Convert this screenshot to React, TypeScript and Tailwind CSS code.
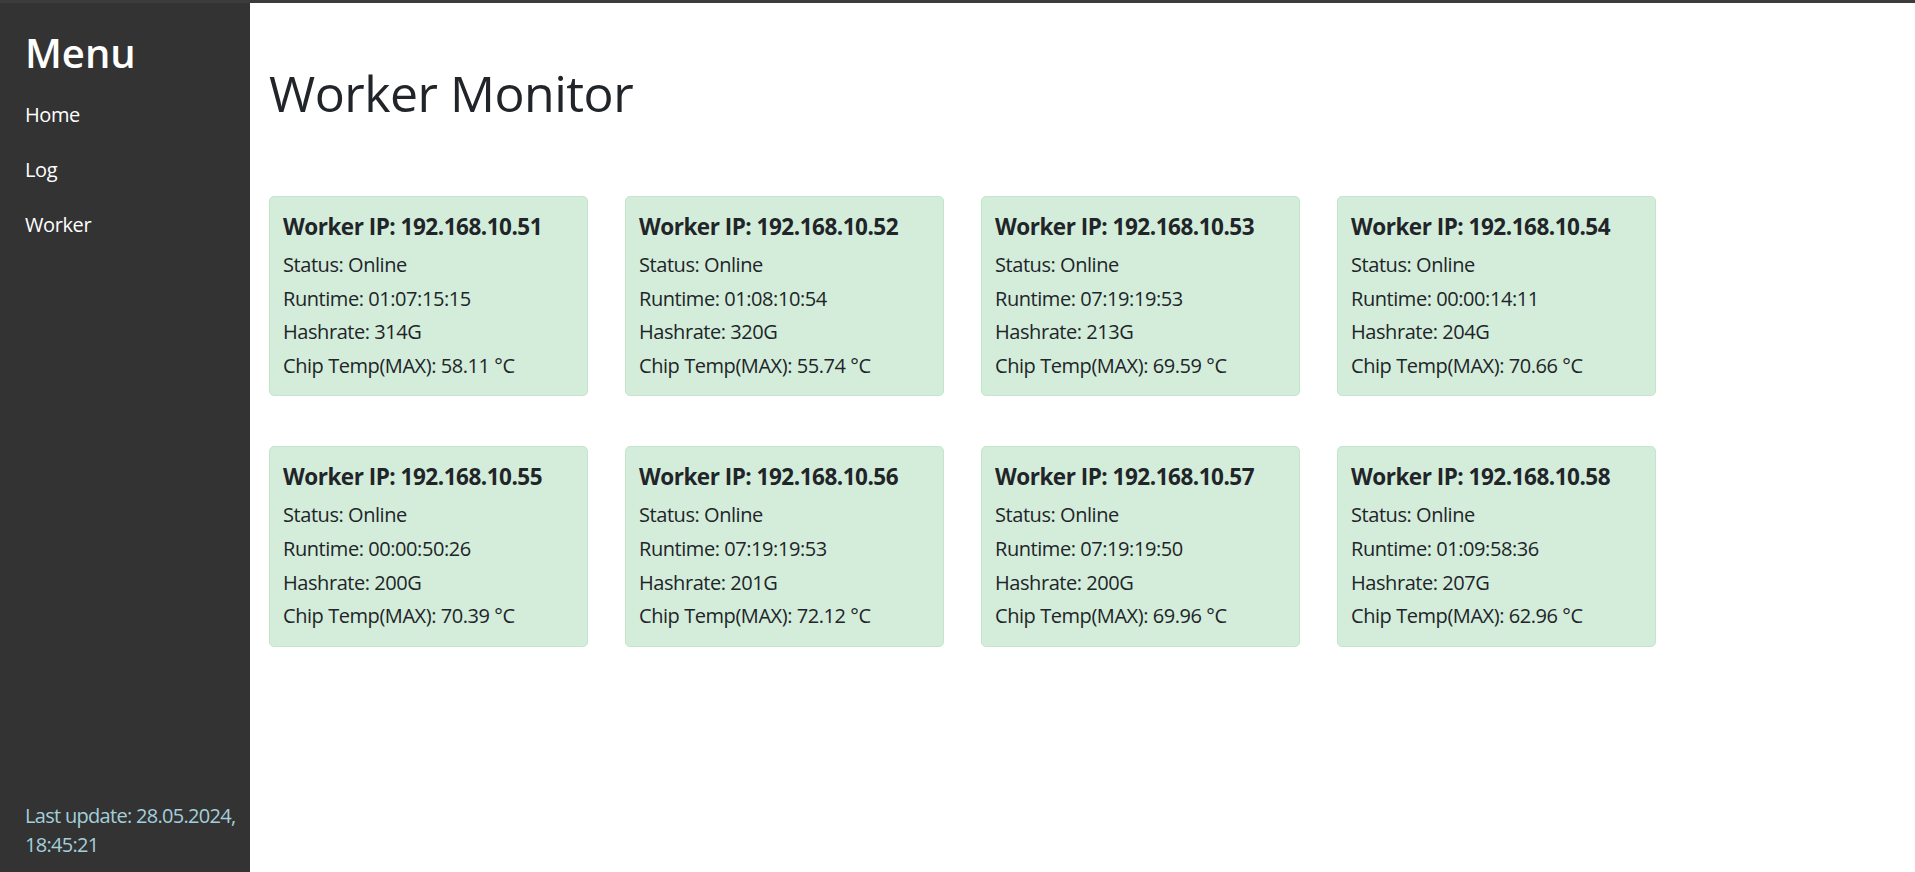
import React from "react";

type Worker = {
  ip: string;
  runtime: string;
  hashrate: string;
  temp: string;
};

const workers: Worker[] = [
  { ip: "192.168.10.51", runtime: "01:07:15:15", hashrate: "314G", temp: "58.11" },
  { ip: "192.168.10.52", runtime: "01:08:10:54", hashrate: "320G", temp: "55.74" },
  { ip: "192.168.10.53", runtime: "07:19:19:53", hashrate: "213G", temp: "69.59" },
  { ip: "192.168.10.54", runtime: "00:00:14:11", hashrate: "204G", temp: "70.66" },
  { ip: "192.168.10.55", runtime: "00:00:50:26", hashrate: "200G", temp: "70.39" },
  { ip: "192.168.10.56", runtime: "07:19:19:53", hashrate: "201G", temp: "72.12" },
  { ip: "192.168.10.57", runtime: "07:19:19:50", hashrate: "200G", temp: "69.96" },
  { ip: "192.168.10.58", runtime: "01:09:58:36", hashrate: "207G", temp: "62.96" },
];

const WorkerCard = ({ worker }: { worker: Worker }) => {
  return (
    <div className="w-[319px] rounded-[5px] border border-[#c3e6cb] bg-[#d4edda] px-[13px] pt-[16px] pb-[13px] text-[#212529]">
      <h5 className="mb-[8px] text-[22.5px] leading-[27px] font-bold tracking-[-0.022em]">
        Worker IP: {worker.ip}
      </h5>
      <div className="text-[20px] leading-[33.6px] tracking-[-0.022em]">
        <p>Status: Online</p>
        <p>Runtime: {worker.runtime}</p>
        <p>Hashrate: {worker.hashrate}</p>
        <p>Chip Temp(MAX): {worker.temp} °C</p>
      </div>
    </div>
  );
};

const App = () => {
  return (
    <div
      className="flex h-screen flex-col bg-white"
      style={{ fontFamily: '"Open Sans", "Noto Sans", sans-serif' }}
    >
      <div className="h-[3px] w-full bg-[#3c3c3c]" />
      <div className="flex flex-1 overflow-hidden">
        <aside className="flex w-[250px] shrink-0 flex-col bg-[#333333] pt-[26px] pr-[4px] pb-[13px] pl-[25px]">
          <h2 className="text-[40px] leading-[48px] font-semibold text-white">
            Menu
          </h2>
          <nav className="mt-[23px] flex flex-col gap-[25px] text-[20px] leading-[30px] tracking-[-0.02em] text-white">
            <a href="#">Home</a>
            <a href="#">Log</a>
            <a href="#">Worker</a>
          </nav>
          <p className="mt-auto text-[20px] leading-[29px] tracking-[-0.035em] text-[#a3cfdb]">
            <span className="whitespace-nowrap">Last update: 28.05.2024,</span>{" "}
            <span className="whitespace-nowrap">18:45:21</span>
          </p>
        </aside>
        <main className="flex-1 pt-[60px] pl-[19px]">
          <h1 className="text-[50px] leading-[60px] font-normal tracking-[-0.01em] text-[#212529]">
            Worker Monitor
          </h1>
          <div className="mt-[73px] flex flex-wrap gap-x-[37px] gap-y-[50px]">
            {workers.map((w) => (
              <WorkerCard key={w.ip} worker={w} />
            ))}
          </div>
        </main>
      </div>
    </div>
  );
};

export default App;
